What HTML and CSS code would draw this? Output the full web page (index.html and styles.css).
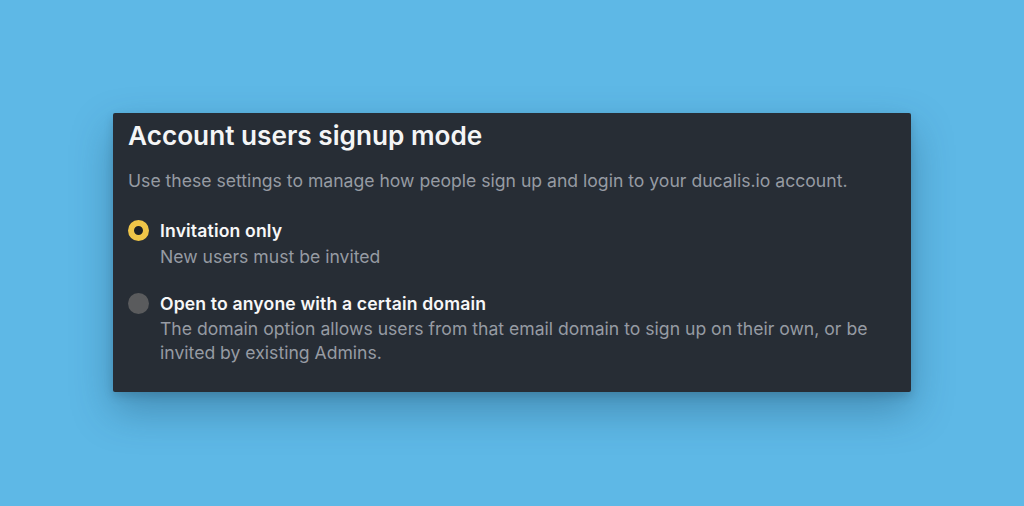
FILE: index.html
```html
<!DOCTYPE html>
<html>
<head>
<meta charset="utf-8">
<link rel="stylesheet" href="styles.css">
</head>
<body>
<div class="page">
  <div class="card">
    <h1 class="title">Account users signup mode</h1>
    <p class="desc">Use these settings to manage how people sign up and login to your ducalis.io account.</p>
    <div class="option first">
      <span class="radio checked"></span>
      <div class="text">
        <div class="label">Invitation only</div>
        <div class="sub">New users must be invited</div>
      </div>
    </div>
    <div class="option second">
      <span class="radio"></span>
      <div class="text">
        <div class="label">Open to anyone with a certain domain</div>
        <div class="sub">The domain option allows users from that email domain to sign up on their own, or be invited by existing Admins.</div>
      </div>
    </div>
  </div>
</div>
</body>
</html>
```

FILE: styles.css
```css
html, body {
  margin: 0;
  padding: 0;
}
body {
  background: #5eb8e6;
  font-family: Inter, "Noto Sans", sans-serif;
  width: 1024px;
  height: 506px;
  overflow: hidden;
}
.page {
  padding-top: 113px;
  padding-left: 113px;
}
.card {
  width: 798px;
  height: 279px;
  box-sizing: border-box;
  background: #272d35;
  border-radius: 2px;
  padding: 7px 15px 0 15px;
  box-shadow: 0 18px 40px rgba(20, 60, 90, 0.35), 0 4px 10px rgba(0,0,0,0.15);
}
.title {
  margin: 0;
  font-size: 26.2px;
  line-height: 32px;
  font-weight: 600;
  color: #f4f5f6;
}
.desc {
  margin: 17px 0 0 0;
  font-size: 17.6px;
  line-height: 24px;
  color: #969ba3;
}
.option {
  display: flex;
  align-items: flex-start;
  gap: 11px;
}
.option.first {
  margin-top: 26px;
}
.option.second {
  margin-top: 23px;
}
.radio {
  flex: none;
  width: 21px;
  height: 21px;
  border-radius: 50%;
  background: #5a5b5d;
  margin-top: 1px;
  box-sizing: border-box;
}
.radio.checked {
  background: #1d2126;
  border: 6px solid #efc548;
}
.text {
  width: 730px;
}
.label {
  font-size: 17.6px;
  line-height: 24px;
  font-weight: 600;
  letter-spacing: 0.15px;
  color: #f7f7f8;
}
.sub {
  font-size: 17.6px;
  line-height: 24px;
  color: #969ba3;
  margin-top: 2px;
}
.second .sub {
  margin-top: 1px;
}
```
